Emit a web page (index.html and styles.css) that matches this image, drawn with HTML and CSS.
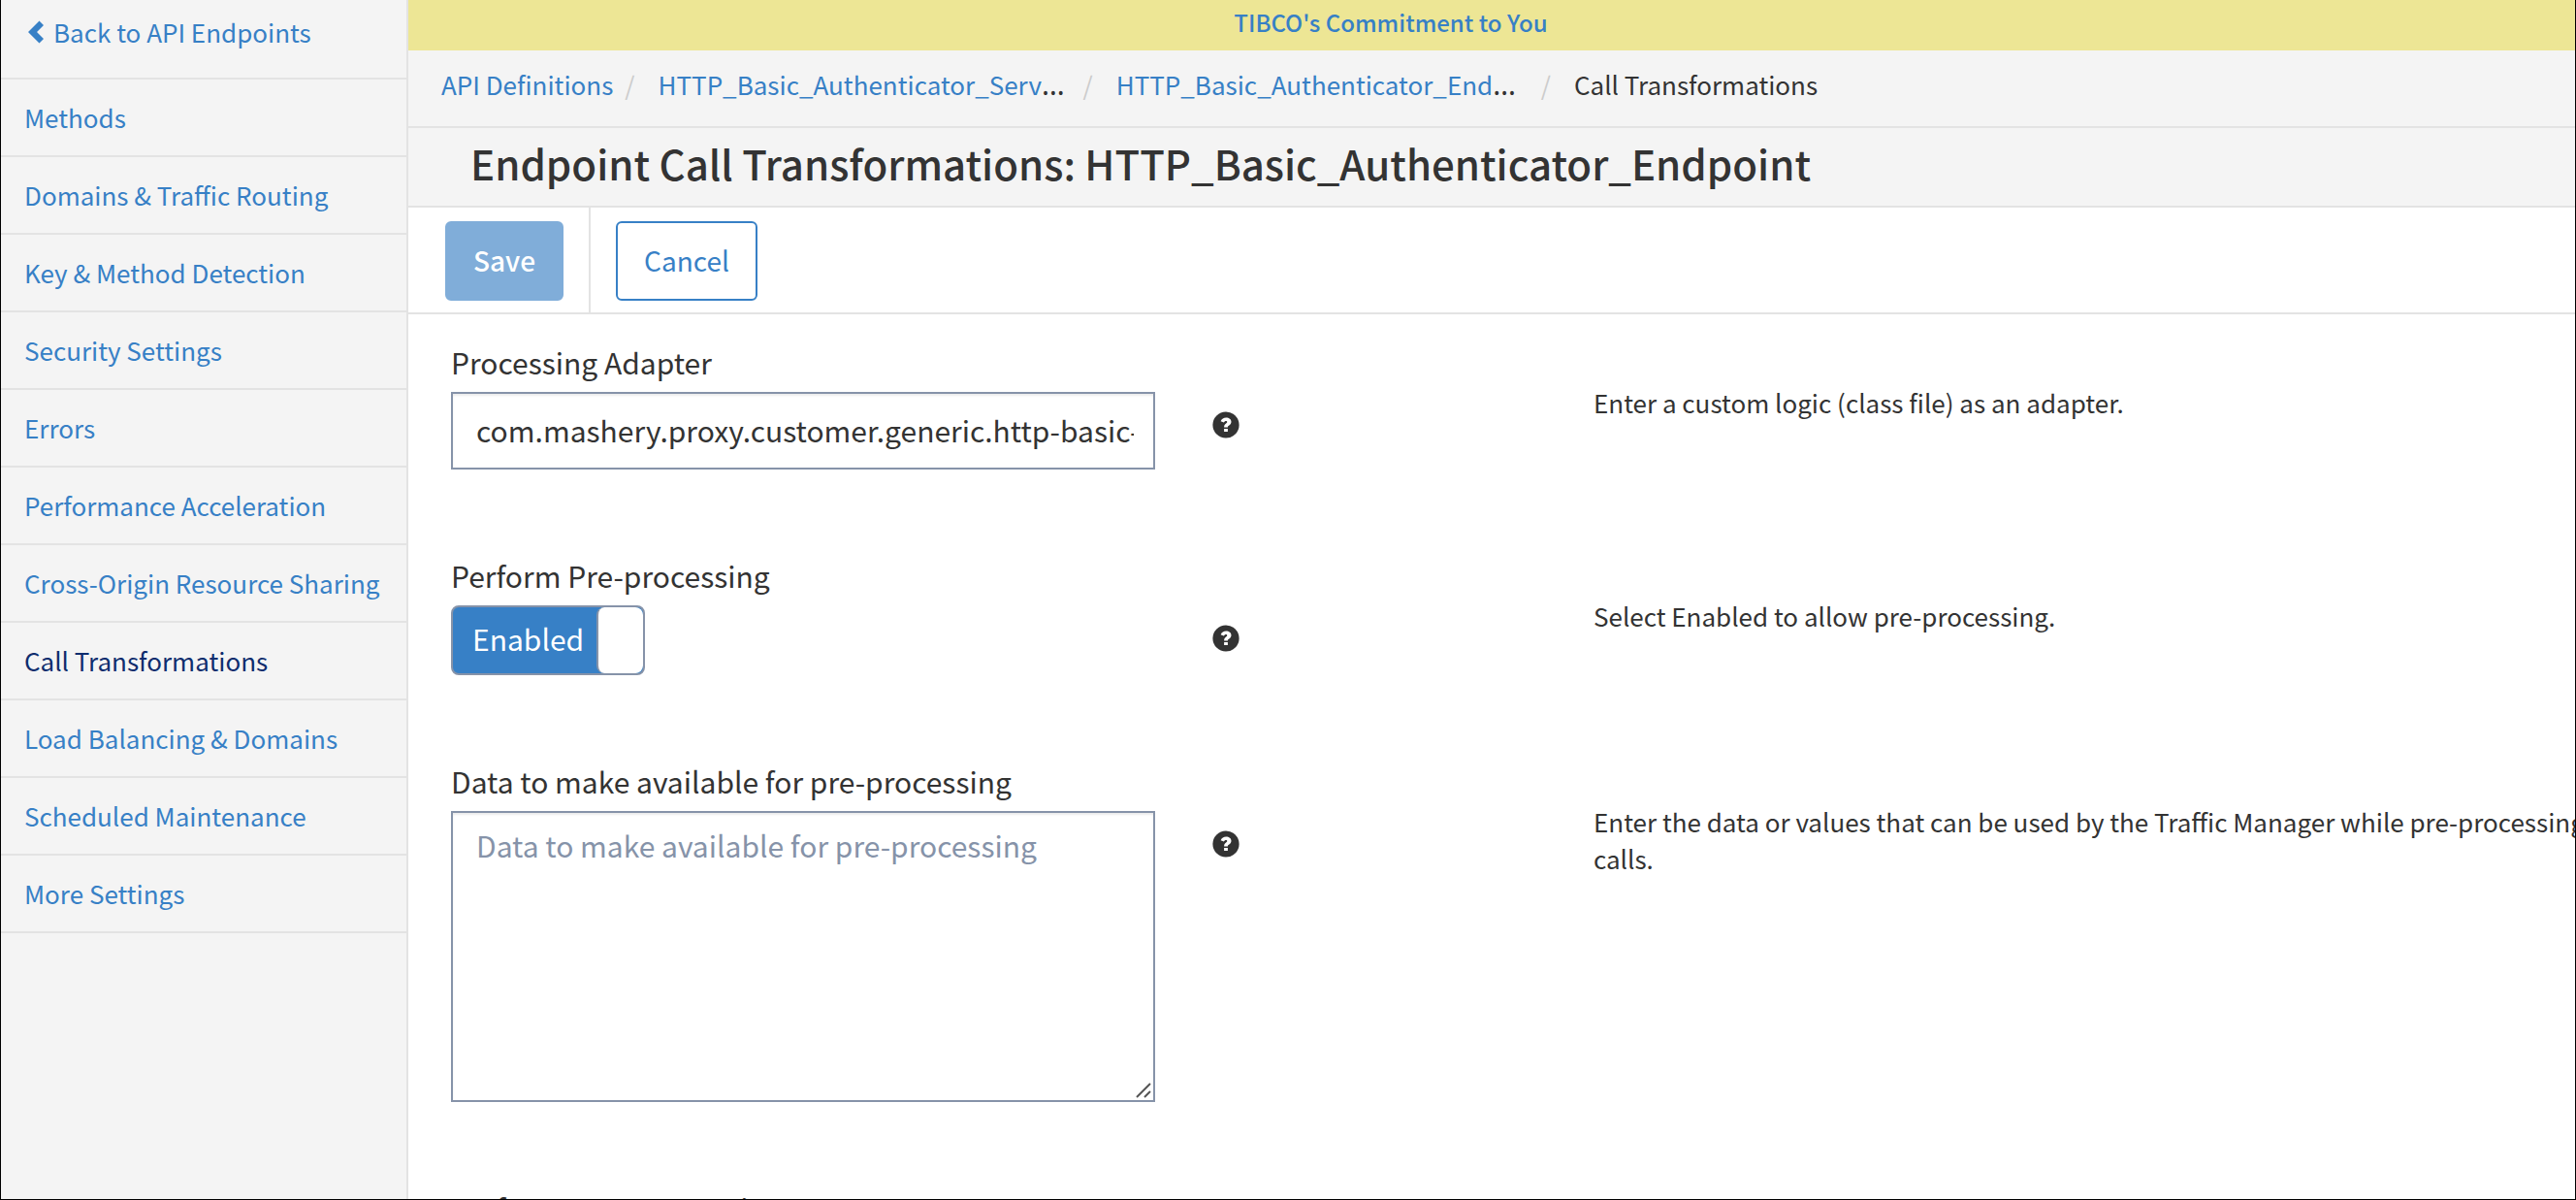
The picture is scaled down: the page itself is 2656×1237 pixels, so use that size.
FILE: index.html
```html
<!DOCTYPE html>
<html lang="en">
<head>
<meta charset="utf-8">
<title>Endpoint Call Transformations</title>
<link rel="stylesheet" href="styles.css">
</head>
<body>
<svg class="sprite" aria-hidden="true">
  <symbol id="help" viewBox="0 0 28 28">
    <circle cx="14" cy="14" r="13.6" fill="#333"/>
    <path d="M8.6 10.2C9.7 7.6 11.6 6.4 14.2 6.4c3 0 5.3 1.8 5.3 4.4 0 2-1.1 3-2.3 3.8-.9.6-1.3.9-1.3 1.9h-3.8c0-2.2.8-3.2 2-4 .8-.5 1.2-.9 1.2-1.5 0-.7-.5-1.100-1.300-1.100-.9 0-1.500.5-2.100 1.500z" fill="#fff"/>
    <rect x="12.100" y="18" width="3.800" height="3" fill="#fff"/>
  </symbol>
</svg>
<div class="app">
  <nav class="sidebar" aria-label="Endpoint settings">
    <a class="side-link back" href="#"><svg class="chevron" viewBox="0 0 18 24" aria-hidden="true"><path d="M13.500.5 18 5l-7 7 7 7-4.500 4.500L2 12z" fill="#3780c6"/></svg>Back to API Endpoints</a>
    <a class="side-link" href="#">Methods</a>
    <a class="side-link" href="#">Domains &amp; Traffic Routing</a>
    <a class="side-link" href="#">Key &amp; Method Detection</a>
    <a class="side-link" href="#">Security Settings</a>
    <a class="side-link" href="#">Errors</a>
    <a class="side-link" href="#">Performance Acceleration</a>
    <a class="side-link" href="#">Cross-Origin Resource Sharing</a>
    <a class="side-link current" href="#" aria-current="page">Call Transformations</a>
    <a class="side-link" href="#">Load Balancing &amp; Domains</a>
    <a class="side-link" href="#">Scheduled Maintenance</a>
    <a class="side-link" href="#">More Settings</a>
  </nav>
  <main class="main">
    <div class="banner"><a href="#">TIBCO's Commitment to You</a></div>
    <ol class="crumbs">
      <li><a href="#">API Definitions</a></li>
      <li><span class="cut"><a href="#">HTTP_Basic_Authenticator_Serv</a><span class="more">…</span></span></li>
      <li><span class="cut"><a href="#">HTTP_Basic_Authenticator_End</a><span class="more">…</span></span></li>
      <li>Call Transformations</li>
    </ol>
    <h1 class="title">Endpoint Call Transformations: HTTP_Basic_Authenticator_Endpoint</h1>
    <div class="toolbar">
      <div class="tool"><button class="btn primary" type="button">Save</button></div>
      <div class="tool"><button class="btn" type="button">Cancel</button></div>
    </div>
    <form class="form">
      <div class="row">
        <div class="field">
          <label class="label" for="adapter">Processing Adapter</label>
          <input class="control" id="adapter" type="text" value="com.mashery.proxy.customer.generic.http-basic-auth">
        </div>
        <svg class="help" role="img" aria-label="Help"><use href="#help"/></svg>
        <p class="hint">Enter a custom logic (class file) as an adapter.</p>
      </div>
      <div class="row">
        <div class="field">
          <label class="label" for="pre">Perform Pre-processing</label>
          <div class="toggle"><input class="toggle-input" id="pre" type="checkbox" checked><span class="toggle-on">Enabled</span><span class="knob"></span></div>
        </div>
        <svg class="help" role="img" aria-label="Help"><use href="#help"/></svg>
        <p class="hint">Select Enabled to allow pre-processing.</p>
      </div>
      <div class="row">
        <div class="field">
          <label class="label" for="data">Data to make available for pre-processing</label>
          <div class="area-wrap">
            <textarea class="control area" id="data" placeholder="Data to make available for pre-processing"></textarea>
            <svg class="grip" viewBox="0 0 16 16" aria-hidden="true"><path d="M1 15 15 1M9 15l6-6" stroke="#555" stroke-width="2"/></svg>
          </div>
        </div>
        <svg class="help" role="img" aria-label="Help"><use href="#help"/></svg>
        <p class="hint">Enter the data or values that can be used by the Traffic Manager while pre-processing API calls.</p>
      </div>
      <div class="row">
        <div class="field">
          <label class="label" for="post">Perform Post-processing</label>
          <div class="toggle"><input class="toggle-input" id="post" type="checkbox" checked><span class="toggle-on">Enabled</span><span class="knob"></span></div>
        </div>
      </div>
    </form>
  </main>
</div>
</body>
</html>
```
FILE: styles.css
```css
* { box-sizing: border-box; }

body {
  margin: 0;
  color: #333;
  background: #fff;
  font-family: "Noto Sans CJK SC", "Open Sans", sans-serif;
  font-size: 26px;
  line-height: 38px;
}

a { color: #3780c6; text-decoration: none; }

.sprite { display: none; }

.app {
  display: flex;
  height: 100vh;
  overflow: hidden;
  border: 1px solid #000;
  border-top: 0;
}

.sidebar {
  flex: 0 0 420px;
  background: #f4f4f4;
  border-right: 2px solid #e3e3e3;
}

.side-link {
  display: flex;
  align-items: center;
  height: 80px;
  padding-left: 24px;
  border-bottom: 2px solid #e3e3e3;
  white-space: nowrap;
}
.side-link.back { height: 82px; padding: 0 0 14px 26px; gap: 10px; }
.side-link.current { color: #0f2d6e; }
.chevron { width: 18px; height: 24px; }

.main { flex: 1; min-width: 0; overflow: hidden; }

.banner {
  height: 52px;
  padding: 4px 208px 0 0;
  background: #ede695;
  text-align: center;
  font-size: 24px;
  font-weight: 500;
}

.crumbs {
  display: flex;
  margin: 0;
  padding: 16px 34px 24px;
  list-style: none;
  background: #f4f4f4;
  border-bottom: 2px solid #e3e3e3;
  white-space: nowrap;
}
.crumbs li { display: flex; height: 38px; }
.crumbs li + li::before { content: "/"; padding: 0 24px 0 12px; color: #ccc; }
.cut { width: 426px; }
.more { font-family: "Noto Sans", sans-serif; font-size: 30px; }

.title {
  margin: 0;
  padding: 8px 64px 16px;
  background: #f4f4f4;
  border-bottom: 2px solid #e3e3e3;
  font-size: 42px;
  font-weight: 500;
  line-height: 56px;
  white-space: nowrap;
}

.toolbar { display: flex; border-bottom: 2px solid #e3e3e3; }
.tool { padding: 14px 26px 12px; }
.tool:first-child { padding-left: 38px; border-right: 2px solid #e3e3e3; }

.btn {
  display: block;
  height: 82px;
  padding: 0 27px 2px;
  border: 2px solid #3780c6;
  border-radius: 6px;
  background: #fff;
  color: #3780c6;
  font: 400 28px/42px "Noto Sans CJK SC", "Open Sans", sans-serif;
}
.btn.primary { border-color: #80add9; background: #80add9; color: #fff; font-weight: 500; }

.form { display: grid; gap: 88px; padding: 28px 44px; }

.row {
  display: grid;
  grid-template-columns: 726px 28px minmax(1408px, 1fr);
  column-gap: 59px;
}

.label { display: block; margin-bottom: 10px; font-size: 30px; line-height: 42px; }

.control {
  display: block;
  width: 100%;
  height: 80px;
  padding: 0 20px 2px 24px;
  border: 2px solid #8693a9;
  border-radius: 0;
  outline: 0;
  background: #fff;
  box-shadow: inset 0 2px 2px rgba(0, 0, 0, .08);
  color: #333;
  font: 400 30px/42px "Noto Sans CJK SC", "Open Sans", sans-serif;
}
.control::placeholder { color: #8693a9; opacity: 1; }

.area-wrap { position: relative; }
.area { height: 300px; padding: 12px 24px; resize: none; }
.grip { position: absolute; right: 4px; bottom: 4px; width: 16px; height: 16px; }

.toggle {
  position: relative;
  display: flex;
  width: 200px;
  height: 72px;
  border: 2px solid #8693a9;
  border-radius: 8px;
  background: #3780c6;
  overflow: hidden;
}
.toggle-input { position: absolute; inset: 0; width: 100%; height: 100%; margin: 0; opacity: 0; }
.toggle-on { flex: 1; padding-left: 20px; color: #fff; font-size: 30px; line-height: 64px; }
.knob { width: 48px; border-left: 2px solid #8693a9; border-radius: 8px; background: #fff; }

.help { width: 28px; height: 28px; margin-top: 72px; }
.hint { margin: 44px 0 0; padding-left: 306px; }
```
